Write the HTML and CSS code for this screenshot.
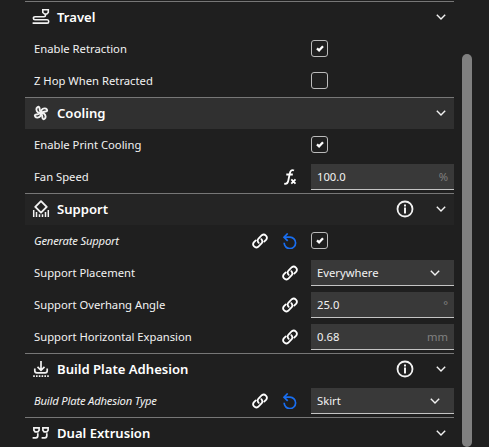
FILE: index.html
```html
<!DOCTYPE html>
<html lang="en">
<head>
<meta charset="utf-8">
<title>Print settings</title>
<link rel="stylesheet" href="styles.css">
</head>
<body>
<svg width="0" height="0" class="defs">
  <symbol id="chev" viewBox="0 0 10 6"><path d="M.8.8 5 5 9.200.8" fill="none" stroke="currentColor" stroke-width="1.400"/></symbol>
  <symbol id="link" viewBox="0 0 16 16"><g fill="none" stroke="currentColor" stroke-width="1.800" stroke-linecap="round"><path d="M6.700 9.900A3.100 3.100 0 0 1 6.500 5.500L9.800 2.200A3.150 3.150 0 0 1 14.200 6.600L12.200 8.600"/><path d="M9.300 6.100A3.100 3.100 0 0 1 9.500 10.500L6.200 13.800A3.150 3.150 0 0 1 1.800 9.400L3.800 7.400"/></g></symbol>
  <symbol id="reset" viewBox="0 0 16 16"><g fill="none" stroke="currentColor" stroke-width="1.700"><path d="M2 4.200H8A5.700 5.700 0 1 1 2.200 9.800"/><path d="M5.700.5 2 4.200 5.700 7.900"/></g></symbol>
  <symbol id="info" viewBox="0 0 18 18"><circle cx="9" cy="9" r="7.500" fill="none" stroke="currentColor" stroke-width="1.800"/><path d="M8 4.500h2v2H8zM8 7.500h2v6H8z" fill="currentColor"/></symbol>
  <symbol id="check" viewBox="0 0 8 7"><path d="M1 3.300 3.100 5.300 7 1.300" fill="none" stroke="currentColor" stroke-width="2.300"/></symbol>
</svg>
<div class="window">
<main class="settings">
  <section>
    <header class="head">
      <svg class="cat" viewBox="0 0 18 18"><g fill="none" stroke="currentColor" stroke-width="1.600"><path d="M10.800 1.700h5.500v2.800l-1.500 1.500h-2.200l-1.800-1.500z"/><path d="M13.500 6V7.200q0 1.600-1.500 1.600H3q-1.600 0-1.600 1.400T3 11.700h12.200q1.500 0 1.500 1.700t-1.500 1.700H.6"/></g></svg>
      <h2>Travel</h2><svg class="chev"><use href="#chev"/></svg>
    </header>
    <div class="row"><label>Enable Retraction</label><span class="check"><svg><use href="#check"/></svg></span></div>
    <div class="row"><label>Z Hop When Retracted</label><span class="check"></span></div>
  </section>
  <section>
    <header class="head active">
      <svg class="cat" viewBox="0 0 18 18"><g fill="none" stroke="currentColor" stroke-width="1.900" stroke-linejoin="round"><path id="blade" d="M9 9C6.500 8.500 5.500 6 6.300 3.900 7 2 9.500 1.700 9.800 3 10 4.400 8.600 5 9 9z" transform="rotate(-25 9 9)"/><use href="#blade" transform="rotate(90 9 9)"/><use href="#blade" transform="rotate(180 9 9)"/><use href="#blade" transform="rotate(270 9 9)"/></g></svg>
      <h2>Cooling</h2><svg class="chev"><use href="#chev"/></svg>
    </header>
    <div class="row"><label>Enable Print Cooling</label><span class="check"><svg><use href="#check"/></svg></span></div>
    <div class="row"><label>Fan Speed</label>
      <svg class="icon" viewBox="0 0 16 16"><g fill="none" stroke="currentColor"><path d="M12 1.500C9.500.2 8.300 2 7.800 4.500L6.200 12Q5.500 15.300 2.200 14.700M4.300 5.500H10.800" stroke-width="1.800"/><path d="M9.300 10.300 13.500 14.600M13.500 10.300 9.300 14.600" stroke-width="1.800"/></g></svg>
      <div class="field">100.0<span class="unit">%</span></div></div>
  </section>
  <section>
    <header class="head hover">
      <svg class="cat" viewBox="0 0 18 18"><g fill="none" stroke="currentColor"><path d="M9 1.200 14.700 6.900 9 12.600 3.300 6.900z" stroke-width="1.900" stroke-linejoin="round"/><path d="M1.700 10v7M4.500 12V17M7.500 14.200v2.800M10.500 14.200v2.800M13.500 12V17M16.300 10v7" stroke-width="1.500"/></g></svg>
      <h2>Support</h2><svg class="info"><use href="#info"/></svg><svg class="chev"><use href="#chev"/></svg>
    </header>
    <div class="row"><label class="changed">Generate Support</label><svg class="icon"><use href="#link"/></svg><svg class="icon reset"><use href="#reset"/></svg><span class="check"><svg><use href="#check"/></svg></span></div>
    <div class="row"><label>Support Placement</label><svg class="icon"><use href="#link"/></svg><div class="field combo">Everywhere<svg class="chev"><use href="#chev"/></svg></div></div>
    <div class="row"><label>Support Overhang Angle</label><svg class="icon"><use href="#link"/></svg><div class="field">25.0<span class="unit">°</span></div></div>
    <div class="row"><label>Support Horizontal Expansion</label><svg class="icon"><use href="#link"/></svg><div class="field">0.68<span class="unit">mm</span></div></div>
  </section>
  <section>
    <header class="head">
      <svg class="cat" viewBox="0 0 18 18"><g fill="none" stroke="currentColor" stroke-width="1.700"><path d="M9 1v9M5.500 6.800 9 10.300 12.500 6.800M2.800 8.500v2.300q0 2 2 2h8.400q2 0 2-2V8.500"/><path d="M1.200 16.200h16" stroke-dasharray="1.600 1.200"/></g></svg>
      <h2>Build Plate Adhesion</h2><svg class="info"><use href="#info"/></svg><svg class="chev"><use href="#chev"/></svg>
    </header>
    <div class="row"><label class="changed">Build Plate Adhesion Type</label><svg class="icon"><use href="#link"/></svg><svg class="icon reset"><use href="#reset"/></svg><div class="field combo">Skirt<svg class="chev"><use href="#chev"/></svg></div></div>
  </section>
  <section>
    <header class="head">
      <svg class="cat" viewBox="0 0 18 18"><g fill="none" stroke="currentColor" stroke-width="1.700"><path id="nozzle" d="M1.900 3.900h5.200v2.400L5.900 7.800H3.100L1.900 6.300zM5.800 9.300v2.500q0 2-2 2H.6"/><use href="#nozzle" x="9"/></g></svg>
      <h2>Dual Extrusion</h2><svg class="chev"><use href="#chev"/></svg>
    </header>
  </section>
</main>
<div class="scrollbar"></div>
</div>
</body>
</html>
```
FILE: styles.css
```css
* { box-sizing: border-box; }
body {
  margin: 0;
  background: #1f1f1f;
  color: #f2f2f2;
  font: 11.25px/18px "Noto Sans", sans-serif;
}
.defs { display: none; }
svg { flex: none; display: block; }
.window {
  display: flex;
  height: 447px;
  overflow: hidden;
}
.settings {
  width: 429px;
  margin: 1px 8px 0 25px;
  flex: none;
}
.head {
  display: flex;
  align-items: center;
  height: 32px;
  padding: 0 8px 1px 7px;
  border-top: 1px solid #777;
}
.head.active { background: #303030; }
.head.hover { background: #242424; }
.head h2 {
  flex: 1;
  margin: 0 0 0 7px;
  font-size: 13.1px;
  line-height: 20px;
  font-weight: 600;
  color: #fff;
}
.cat { width: 18px; height: 18px; }
.chev { width: 10px; height: 6px; }
.head .chev { margin-bottom: 1px; }
.info { width: 18px; height: 18px; margin-right: 22px; }
.row {
  display: flex;
  align-items: center;
  height: 32px;
  padding-left: 9px;
}
.row label { flex: 1; }
.changed {
  font-style: italic;
  letter-spacing: -0.2px;
}
.icon {
  width: 16px;
  height: 16px;
  margin-right: 14px;
  color: #fff;
}
.icon.reset { color: #196ef0; }
.icon:has(+ .check), .icon:has(+ .field) { margin-right: 13px; }
.check {
  display: flex;
  align-items: center;
  justify-content: center;
  width: 17px;
  height: 17px;
  margin: 0 126px 1px 0;
  border: 1px solid #bbb;
  border-radius: 3px;
  color: #fff;
}
.check svg { width: 8px; height: 7px; }
.field {
  display: flex;
  align-items: center;
  justify-content: space-between;
  width: 143px;
  height: 26px;
  padding: 0 6px;
  background: #393939;
  border-bottom: 1px solid #c4c4c4;
}
.field.combo { padding-right: 14px; }
.unit { color: #808080; }
.scrollbar {
  width: 10px;
  height: 393px;
  margin-top: 54px;
  border-radius: 5px;
  background: #808080;
}
```
